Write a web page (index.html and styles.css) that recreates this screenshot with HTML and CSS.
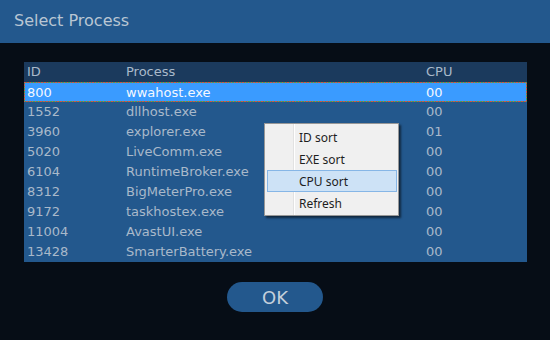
FILE: index.html
```html
<!DOCTYPE html>
<html lang="en">
<head>
    <meta charset="UTF-8">
    <title>Select Process</title>
    <link rel="stylesheet" href="styles.css">
</head>
<body>
<div id="dialog">
    <div id="titleBar">Select Process</div>
    <div id="content">
        <div id="list">
            <div class="row head">
                <span>ID</span><span>Process</span><span>CPU</span>
            </div>
            <div class="row selected">
                <span>800</span><span>wwahost.exe</span><span>00</span>
            </div>
            <div class="row"><span>1552</span><span>dllhost.exe</span><span>00</span></div>
            <div class="row"><span>3960</span><span>explorer.exe</span><span>01</span></div>
            <div class="row"><span>5020</span><span>LiveComm.exe</span><span>00</span></div>
            <div class="row"><span>6104</span><span>RuntimeBroker.exe</span><span>00</span></div>
            <div class="row"><span>8312</span><span>BigMeterPro.exe</span><span>00</span></div>
            <div class="row"><span>9172</span><span>taskhostex.exe</span><span>00</span></div>
            <div class="row"><span>11004</span><span>AvastUI.exe</span><span>00</span></div>
            <div class="row"><span>13428</span><span>SmarterBattery.exe</span><span>00</span></div>
        </div>
        <div id="buttons">
            <input class="okBtn" type="button" value="OK"/>
        </div>
    </div>
    <!-- right click menu -->
    <div id="menu">
        <div class="item">ID sort</div>
        <div class="item">EXE sort</div>
        <div class="item active">CPU sort</div>
        <div class="item">Refresh</div>
    </div>
</div>
</body>
</html>
```
FILE: styles.css
```css
body {
    margin: 0;
    background: #060d16;
    font-family: "DejaVu Sans", sans-serif;
}

#dialog {
    position: relative;
    width: 550px;
    height: 340px;
    background: #060d16;
}

#titleBar {
    height: 43px;
    line-height: 42px;
    padding-left: 14px;
    background: #23588d;
    color: #b9c6d3;
    font-size: 16px;
}

#content {
    padding: 19px 23px 0 24px;
}

#list {
    background: #23588d;
    font-size: 13px;
    color: #a9b9ca;
}

.row {
    display: grid;
    grid-template-columns: 99px 300px 1fr;
    height: 20px;
    line-height: 20px;
    box-sizing: border-box;
}

.row span {
    padding-left: 3px;
    white-space: nowrap;
}

.row.head {
    background: #1b3a5d;
}

.row.selected {
    background: #3a9bff;
    color: #f4f8ff;
    border: 1px solid;
    border-image: repeating-linear-gradient(45deg, #d0504a 0 1px, #3fa060 1px 2px) 1;
    line-height: 19px;
}

.row.selected span {
    padding-left: 2px;
}

#buttons {
    display: flex;
    justify-content: center;
    padding-top: 20px;
    padding-right: 1px;
}

.okBtn {
    width: 96px;
    height: 30px;
    border: none;
    border-radius: 15px;
    background: #23588d;
    color: #c3cfdb;
    font-family: "DejaVu Sans", sans-serif;
    font-size: 18px;
    padding: 0;
}

#menu {
    position: absolute;
    left: 264px;
    top: 123px;
    width: 135px;
    box-sizing: border-box;
    padding: 2px 1px 1px 2px;
    background: #f0f0f0;
    border: 1px solid #979797;
    box-shadow: 2px 2px 2px rgba(0, 0, 0, 0.55);
    font-family: "Noto Sans", sans-serif;
    font-size: 12px;
    color: #1e1e1e;
    background-image: linear-gradient(to right, transparent 28px, #e2e2e2 28px, #e2e2e2 29px, #ffffff 29px, #ffffff 30px, transparent 30px);
}

#menu .item {
    height: 22px;
    line-height: 21px;
    padding-left: 31px;
    box-sizing: border-box;
    border: 1px solid transparent;
}

#menu .item.active {
    background: #cde2f6;
    border-color: #86b6e6;
}
```
